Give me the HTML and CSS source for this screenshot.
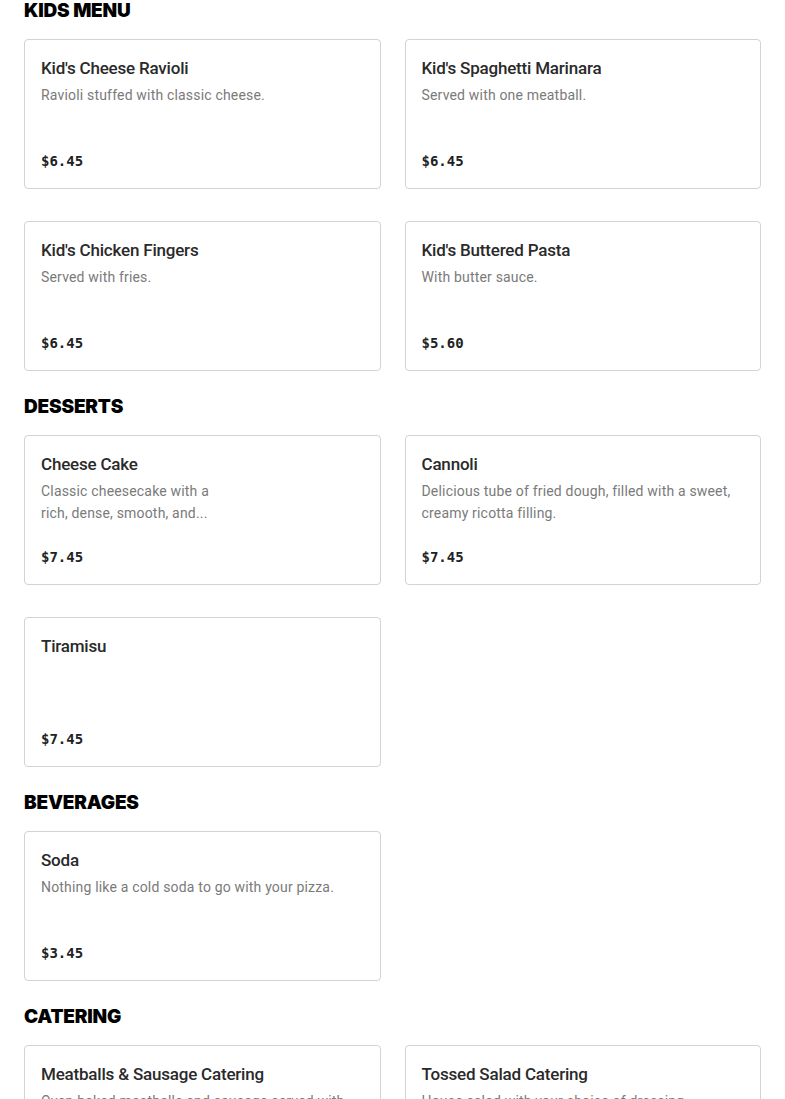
FILE: index.html
```html
<!DOCTYPE html>
<html>
<head>
<meta charset="utf-8">
<link rel="stylesheet" href="styles.css">
</head>
<body>
<main class="menu">
  <section class="section">
    <h2 class="section-title first">KIDS MENU</h2>
    <div class="grid">
      <div class="card"><div class="card-title">Kid's Cheese Ravioli</div><div class="card-desc">Ravioli stuffed with classic cheese.</div><div class="card-price">$6.45</div></div>
      <div class="card"><div class="card-title">Kid's Spaghetti Marinara</div><div class="card-desc">Served with one meatball.</div><div class="card-price">$6.45</div></div>
      <div class="card"><div class="card-title">Kid's Chicken Fingers</div><div class="card-desc">Served with fries.</div><div class="card-price">$6.45</div></div>
      <div class="card"><div class="card-title">Kid's Buttered Pasta</div><div class="card-desc">With butter sauce.</div><div class="card-price">$5.60</div></div>
    </div>
  </section>
  <section class="section">
    <h2 class="section-title">DESSERTS</h2>
    <div class="grid">
      <div class="card"><div class="card-title">Cheese Cake</div><div class="card-desc narrow">Classic cheesecake with a rich, dense, smooth, and...</div><div class="card-price">$7.45</div></div>
      <div class="card"><div class="card-title">Cannoli</div><div class="card-desc">Delicious tube of fried dough, filled with a sweet, creamy ricotta filling.</div><div class="card-price">$7.45</div></div>
      <div class="card"><div class="card-title">Tiramisu</div><div class="card-desc"></div><div class="card-price">$7.45</div></div>
    </div>
  </section>
  <section class="section">
    <h2 class="section-title">BEVERAGES</h2>
    <div class="grid">
      <div class="card"><div class="card-title">Soda</div><div class="card-desc">Nothing like a cold soda to go with your pizza.</div><div class="card-price">$3.45</div></div>
    </div>
  </section>
  <section class="section">
    <h2 class="section-title">CATERING</h2>
    <div class="grid">
      <div class="card"><div class="card-title">Meatballs &amp; Sausage Catering</div><div class="card-desc">Oven-baked meatballs and sausage served with marinara sauce.</div><div class="card-price">$45.00</div></div>
      <div class="card"><div class="card-title">Tossed Salad Catering</div><div class="card-desc">House salad with your choice of dressing.</div><div class="card-price">$35.00</div></div>
    </div>
  </section>
</main>
</body>
</html>
```
FILE: styles.css
```css
html, body {
  margin: 0;
  padding: 0;
  background: #ffffff;
}
body {
  font-family: Roboto, "Liberation Sans", sans-serif;
  color: #2a2a2a;
}
.menu {
  padding: 0 24px 40px 24px;
}
.section-title {
  margin: 23px 0 15px 0;
  font-family: Inter, "Liberation Sans", sans-serif;
  font-weight: 900;
  font-size: 19px;
  line-height: 26px;
  color: #000;
  letter-spacing: -0.2px;
}
.section-title.first {
  margin-top: -2px;
}
.grid {
  display: grid;
  grid-template-columns: 1fr 1fr;
  gap: 32px 24px;
}
.card {
  height: 150px;
  box-sizing: border-box;
  border: 1px solid #d3d3d3;
  border-radius: 4px;
  padding: 16px 16px 15px 16px;
  display: flex;
  flex-direction: column;
}
.card-title {
  font-size: 17px;
  line-height: 24px;
  font-weight: 500;
  color: #2a2a2a;
  letter-spacing: -0.2px;
  margin-bottom: 4px;
}
.card-desc {
  font-size: 14px;
  line-height: 22px;
  color: #7a7a7a;
  letter-spacing: 0.18px;
}
.card-desc.narrow {
  max-width: 195px;
}
.card-price {
  margin-top: auto;
  font-family: "DejaVu Sans Mono", "Liberation Mono", monospace;
  font-weight: bold;
  font-size: 14px;
  line-height: 24px;
  color: #222;
}
```
